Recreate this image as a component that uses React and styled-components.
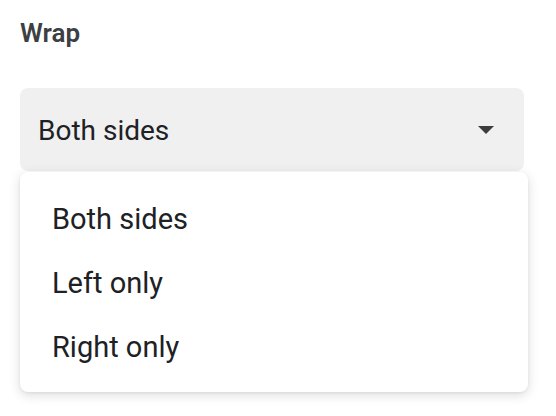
import styled, { createGlobalStyle } from 'styled-components';

const GlobalStyle = createGlobalStyle`
  html, body {
    margin: 0;
    padding: 0;
    background: #ffffff;
  }
  body {
    font-family: Roboto, 'Liberation Sans', Arial, sans-serif;
  }
`;

const Page = styled.div`
  width: 556px;
  height: 416px;
  padding: 18px 20px 0 20px;
  box-sizing: border-box;
`;

const Label = styled.div`
  font-size: 26px;
  line-height: 30px;
  font-weight: 600;
  color: #3c4043;
  margin-bottom: 40px;
`;

const SelectWrap = styled.div`
  position: relative;
  width: 504px;
`;

const SelectBox = styled.div`
  display: flex;
  align-items: center;
  justify-content: space-between;
  height: 83px;
  padding: 2px 30px 0 18px;
  box-sizing: border-box;
  background: #f0f0f0;
  border-radius: 8px;
  font-size: 28px;
  color: #202124;
`;

const Arrow = styled.svg`
  width: 16px;
  height: 8px;
  flex-shrink: 0;
  margin-top: -1px;
`;

const Menu = styled.ul`
  position: absolute;
  top: 84px;
  left: 0;
  width: 508px;
  margin: 0;
  padding: 15px 0 13px 0;
  list-style: none;
  background: #ffffff;
  border-radius: 8px;
  box-shadow: 0 3px 12px rgba(0, 0, 0, 0.14), 0 1px 3px rgba(0, 0, 0, 0.06);
`;

const Item = styled.li`
  height: 64px;
  line-height: 64px;
  padding-left: 32px;
  font-size: 29px;
  color: #202124;
`;

const options = ['Both sides', 'Left only', 'Right only'];

export default function App() {
  return (
    <>
      <GlobalStyle />
      <Page>
        <Label>Wrap</Label>
        <SelectWrap>
          <SelectBox>
            <span>Both sides</span>
            <Arrow viewBox="0 0 16 8">
              <path d="M0 0 L16 0 L8 8 Z" fill="#3c3c3c" />
            </Arrow>
          </SelectBox>
          <Menu>
            {options.map((o) => (
              <Item key={o}>{o}</Item>
            ))}
          </Menu>
        </SelectWrap>
      </Page>
    </>
  );
}
